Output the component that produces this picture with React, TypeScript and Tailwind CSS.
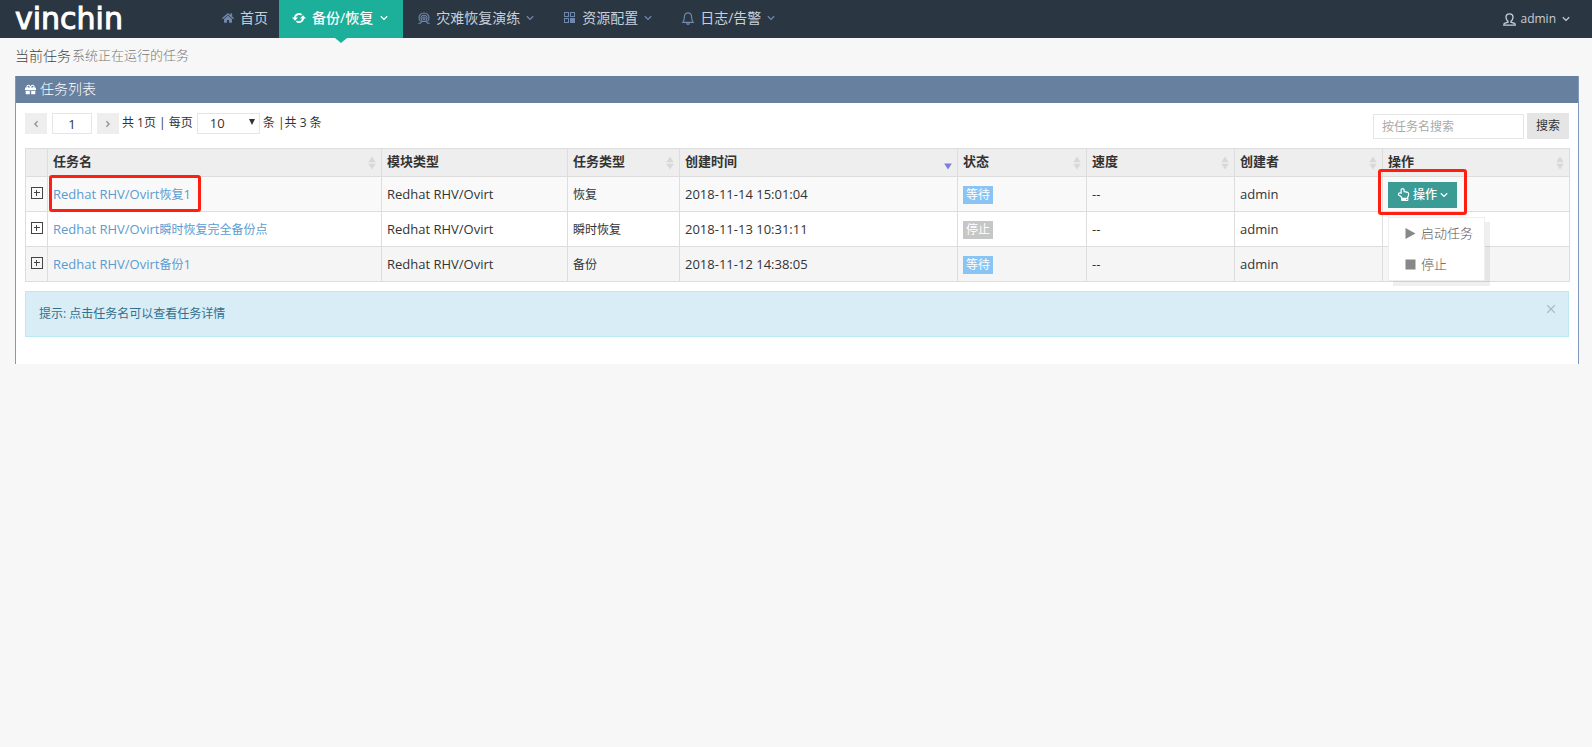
import React from 'react';
import { FaHome, FaGift, FaRegHandPointUp, FaAngleLeft, FaAngleRight } from 'react-icons/fa';
import { X } from 'lucide-react';

type TaskStatus = 'waiting' | 'stopped';

interface Task {
  source: string;
  label: string;
  suffix: string;
  module: string;
  type: string;
  createdAt: string;
  status: TaskStatus;
  speed: string;
  creator: string;
}

const TASKS: Task[] = [
  { source: 'Redhat RHV/Ovirt', label: '恢复', suffix: '1', module: 'Redhat RHV/Ovirt', type: '恢复', createdAt: '2018-11-14 15:01:04', status: 'waiting', speed: '--', creator: 'admin' },
  { source: 'Redhat RHV/Ovirt', label: '瞬时恢复完全备份点', suffix: '', module: 'Redhat RHV/Ovirt', type: '瞬时恢复', createdAt: '2018-11-13 10:31:11', status: 'stopped', speed: '--', creator: 'admin' },
  { source: 'Redhat RHV/Ovirt', label: '备份', suffix: '1', module: 'Redhat RHV/Ovirt', type: '备份', createdAt: '2018-11-12 14:38:05', status: 'waiting', speed: '--', creator: 'admin' },
];

const COLUMNS = [
  { title: '任务名', width: 'w-[334px]', sort: 'both' },
  { title: '模块类型', width: 'w-[186px]', sort: 'none' },
  { title: '任务类型', width: 'w-[112px]', sort: 'both' },
  { title: '创建时间', width: 'w-[278px]', sort: 'desc' },
  { title: '状态', width: 'w-[129px]', sort: 'both' },
  { title: '速度', width: 'w-[148px]', sort: 'both' },
  { title: '创建者', width: 'w-[148px]', sort: 'both' },
  { title: '操作', width: 'w-[187px]', sort: 'both' },
];

const ROW_BG = ['bg-[#f9f9f9]', 'bg-white', 'bg-[#f5f5f5]'];

const CELL = 'border border-[#ddd] px-[5px] pt-[2px]';

function RefreshIcon() {
  return (
    <svg className="h-3 w-[14px]" viewBox="0 0 14 12" fill="none" stroke="currentColor" strokeWidth="1.9">
      <path d="M3 6 A4 4 0 0 1 9.6 2.9 M11 6 A4 4 0 0 1 4.4 9.1" />
      <path d="M0 5.4 H6 L3 8.8 Z M8 6.6 H14 L11 3.2 Z" fill="currentColor" stroke="none" />
    </svg>
  );
}

function DrillIcon() {
  return (
    <svg className="h-3 w-3" viewBox="0 0 12 12" fill="none" stroke="currentColor" strokeWidth="1.1">
      <path d="M2.6 9.6 A5 5 0 1 1 9.4 9.6" />
      <path d="M4.2 8.6 A3 3 0 1 1 7.8 8.6" />
      <circle cx="6" cy="6.2" r="1.2" />
      <path d="M0.2 11.2 H2.4 L4.2 9.4 H7.8 L9.6 11.2 H11.8" />
    </svg>
  );
}

function ResourceIcon() {
  return (
    <svg className="h-3 w-3" viewBox="0 0 12 12" fill="none" stroke="currentColor">
      <rect x="0.5" y="0.5" width="4" height="4" />
      <rect x="6.5" y="0.5" width="4" height="4" />
      <rect x="0.5" y="6.5" width="4" height="4" />
      <rect x="6.5" y="6.5" width="4" height="4" fill="currentColor" />
    </svg>
  );
}

function BellIcon() {
  return (
    <svg className="h-[13px] w-3" viewBox="0 0 12 13" fill="none" stroke="currentColor" strokeWidth="1.2">
      <path d="M0.8 10.4 H11.2 C9.8 9 9.6 8 9.6 5 C9.6 2.4 8.2 0.8 6 0.8 C3.8 0.8 2.4 2.4 2.4 5 C2.4 8 2.2 9 0.8 10.4 Z" />
      <path d="M4.7 11 C4.8 12.7 7.2 12.7 7.3 11" />
    </svg>
  );
}

function UserIcon() {
  return (
    <svg className="h-[13px] w-[13px]" viewBox="0 0 13 13" fill="none" stroke="currentColor" strokeWidth="1.3">
      <path d="M5 8.2 C3.4 7 3 5.6 3 4.2 C3 2 4.4 0.8 6.5 0.8 C8.6 0.8 10 2 10 4.2 C10 5.6 9.6 7 8 8.2 V9.2 L11.8 10.4 L12.2 12.2 H0.8 L1.2 10.4 L5 9.2 Z" />
    </svg>
  );
}

function Chevron({ className = '' }: { className?: string }) {
  return (
    <svg className={`h-2 w-2 ${className}`} viewBox="0 0 8 8" fill="none" stroke="currentColor" strokeWidth="1.3">
      <path d="M0.8 2.2 L4 5.4 L7.2 2.2" />
    </svg>
  );
}

interface NavItemProps {
  icon: React.ReactNode;
  label: string;
  active?: boolean;
  menu?: boolean;
}

function NavItem({ icon, label, active = false, menu = true }: NavItemProps) {
  const padding = active ? 'pl-[13px] pr-[15px]' : menu ? 'px-[15px]' : 'pl-[15px] pr-[11px]';

  return (
    <a
      href="#"
      className={`relative flex items-center gap-[6px] pb-[2px] text-sm ${padding} ${
        active ? 'bg-[#1caf9a] text-white font-medium' : 'text-[#c6cfda]'
      }`}
    >
      <span className={active ? 'text-white' : 'text-[#6f88ab]'}>{icon}</span>
      {label}
      {menu && <Chevron className={active ? 'ml-px text-white' : 'text-[#6f88ab]'} />}
      {active && (
        <span className="absolute top-full left-1/2 -translate-x-1/2 border-x-6 border-t-5 border-x-transparent border-t-[#1caf9a]"></span>
      )}
    </a>
  );
}

function SortIcon({ sort }: { sort: string }) {
  if (sort === 'none') return null;
  return (
    <svg className="h-[14px] w-2" viewBox="0 0 8 14">
      {sort === 'both' && <path d="M4 0.5 L7.8 6.2 H0.2 Z M4 13.5 L7.8 7.8 H0.2 Z" fill="#d8d8d8" />}
      {sort === 'desc' && <path d="M4 13.5 L7.8 7.5 H0.2 Z" fill="#7b7be0" />}
    </svg>
  );
}

function StatusLabel({ status }: { status: TaskStatus }) {
  return (
    <span className={`block h-[18px] w-fit px-[3px] text-xs leading-[18px] text-white ${status === 'waiting' ? 'bg-[#89c4f4]' : 'bg-[#c6c6c6]'}`}>
      {status === 'waiting' ? '等待' : '停止'}
    </span>
  );
}

function ActionMenu() {
  return (
    <div className="relative w-fit">
      <button className="flex h-[26px] w-[69px] items-center justify-center gap-[3px] bg-[#3b9c96] pb-px text-xs font-medium text-white">
        <FaRegHandPointUp className="h-[13px] w-[13px]" />
        操作
        <Chevron />
      </button>
      <div className="absolute -inset-x-[10px] -top-[13px] -bottom-[7px] z-20 rounded-[3px] border-3 border-[#ff1f10] pointer-events-none"></div>
      <ul className="absolute top-[35px] left-0 z-10 w-[97px] border border-[#eee] bg-white text-[13px] font-light text-[#555] shadow-[5px_5px_rgba(102,102,102,0.1)]">
        <li>
          <button className="flex h-[31px] w-full items-center gap-[5px] pl-4">
            <svg className="h-[11px] w-[11px]" viewBox="0 0 11 11">
              <path d="M0.5 0 L10.5 5.5 L0.5 11 Z" fill="#888" />
            </svg>
            启动任务
          </button>
        </li>
        <li>
          <button className="flex h-[31px] w-full items-center gap-[5px] pl-4">
            <svg className="h-[11px] w-[11px]" viewBox="0 0 11 11">
              <rect x="0.5" y="0.5" width="10" height="10" fill="#888" />
            </svg>
            停止
          </button>
        </li>
      </ul>
    </div>
  );
}

export default function App() {
  return (
    <div className="min-h-screen bg-[#f7f7f7] font-['Open_Sans','Noto_Sans_CJK_SC',sans-serif] text-[13px] text-[#333]">
      {/* Top navigation */}
      <header className="flex h-[38px] justify-between bg-[#2b3643]">
        <div className="flex">
          <a href="#" className="flex w-[207px] items-center pl-[15px] font-['DejaVu_Sans',sans-serif] text-[30px] leading-none text-white [-webkit-text-stroke:1px_white]">
            vinchin
          </a>
          <nav className="flex">
            <NavItem icon={<FaHome className="h-3 w-3" />} label="首页" menu={false} />
            <NavItem icon={<RefreshIcon />} label="备份/恢复" active />
            <NavItem icon={<DrillIcon />} label="灾难恢复演练" />
            <NavItem icon={<ResourceIcon />} label="资源配置" />
            <NavItem icon={<BellIcon />} label="日志/告警" />
          </nav>
        </div>
        <button className="flex items-center gap-1 pr-[22px] text-xs text-[#c6cfda]">
          <UserIcon />
          admin
          <Chevron className="ml-[2px]" />
        </button>
      </header>

      <main className="pr-[13px] pl-[15px]">
        <h1 className="flex h-[38px] items-center gap-px pb-[3px] text-sm font-light text-[#444]">
          当前任务 <small className="text-[13px] text-[#777]">系统正在运行的任务</small>
        </h1>

        <section className="border-x border-[#8099bd] bg-white">
          <h2 className="flex h-[27px] items-center gap-1 bg-[#67809f] pb-[2px] pl-[9px] text-sm font-light text-white">
            <FaGift className="mt-[2px] h-[11px] w-[11px]" />
            任务列表
          </h2>

          <div className="px-[9px] pt-[10px] pb-[27px]">
            {/* Paging and search */}
            <div className="flex h-[35px] items-start justify-between">
              <div className="flex items-center gap-[3px] text-xs">
                <button aria-label="上一页" className="flex h-[21px] w-[22px] items-center justify-center bg-[#eee] text-[#999]">
                  <FaAngleLeft className="h-[10px] w-[10px]" />
                </button>
                <input aria-label="页码" defaultValue="1" className="mx-[2px] h-[21px] w-10 border border-[#e5e5e5] text-center text-[13px]" />
                <button aria-label="下一页" className="flex h-[21px] w-[22px] items-center justify-center bg-[#eee] text-[#999]">
                  <FaAngleRight className="h-[10px] w-[10px]" />
                </button>
                <label htmlFor="page-size" className="pb-[2px]">共 1页 | 每页</label>
                <div className="relative ml-px">
                  <select id="page-size" className="block h-[21px] w-[63px] appearance-none border border-[#e5e5e5] bg-white pl-3 text-[13px]">
                    <option>10</option>
                    <option>20</option>
                    <option>50</option>
                  </select>
                  <span className="absolute top-[6px] right-[5px] border-x-3 border-t-6 border-x-transparent border-t-[#333] pointer-events-none"></span>
                </div>
                <span className="pb-[2px]">条 |共 3 条</span>
              </div>
              <form className="flex items-end gap-[3px] text-xs">
                <input aria-label="按任务名搜索" placeholder="按任务名搜索" className="h-[25px] w-[151px] border border-[#e5e5e5] px-2 placeholder:text-[#aaa]" />
                <button type="button" className="h-[26px] w-[42px] bg-[#e5e5e5]">搜索</button>
              </form>
            </div>

            <table className="w-full table-fixed border-collapse text-left">
              <colgroup>
                <col className="w-[22px]" />
                {COLUMNS.map((col) => (
                  <col key={col.title} className={col.width} />
                ))}
              </colgroup>
              <thead>
                <tr className="h-[28px] bg-[#eee]">
                  <th className="border border-[#ddd]"></th>
                  {COLUMNS.map((col) => (
                    <th key={col.title} className="border border-[#ddd] px-[5px] font-semibold">
                      <div className="flex h-[26px] items-center justify-between">
                        <span className="pb-[2px]">{col.title}</span>
                        <SortIcon sort={col.sort} />
                      </div>
                    </th>
                  ))}
                </tr>
              </thead>
              <tbody>
                {TASKS.map((task, i) => (
                  <tr key={task.createdAt} className={`h-[35px] ${ROW_BG[i]}`}>
                    <td className="border border-[#ddd]">
                      <button aria-label="展开" className="mx-auto block pb-[3px]">
                        <svg className="h-3 w-3" viewBox="0 0 12 12" fill="none" stroke="#444">
                          <rect x="0.5" y="0.5" width="11" height="11" />
                          <path d="M3 5.5 H9 M5.5 3 V9" />
                        </svg>
                      </button>
                    </td>
                    <td className={CELL}>
                      <div className="relative w-fit">
                        <a href="#" className="text-[#5b9bd1]">
                          {task.source}
                          <span className="text-xs">{task.label}</span>
                          {task.suffix}
                        </a>
                        {i === 0 && (
                          <div className="absolute -top-[10px] -bottom-[7px] -left-[4px] w-[152px] rounded-[3px] border-3 border-[#ff1f10] pointer-events-none"></div>
                        )}
                      </div>
                    </td>
                    <td className={CELL}>{task.module}</td>
                    <td className={`${CELL} text-xs`}>{task.type}</td>
                    <td className={CELL}>{task.createdAt}</td>
                    <td className={CELL}>
                      <StatusLabel status={task.status} />
                    </td>
                    <td className={CELL}>{task.speed}</td>
                    <td className={CELL}>{task.creator}</td>
                    <td className={CELL}>{i === 0 && <ActionMenu />}</td>
                  </tr>
                ))}
              </tbody>
            </table>

            <div className="mt-[9px] flex h-[46px] items-center justify-between border border-[#bce8f1] bg-[#d9edf7] pr-[9px] pl-[13px] text-xs text-[#31708f]">
              <p>提示: 点击任务名可以查看任务详情</p>
              <button aria-label="关闭" className="pb-[10px] text-[#a9bcc6]">
                <X className="h-[14px] w-4" />
              </button>
            </div>
          </div>
        </section>
      </main>
    </div>
  );
}
